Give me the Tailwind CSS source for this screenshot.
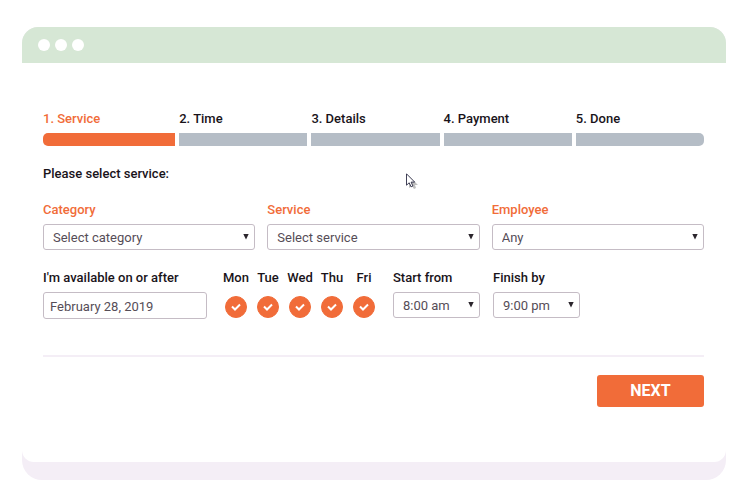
<!DOCTYPE html>
<html lang="en">
<head>
  <meta charset="UTF-8" />
  <meta name="viewport" content="width=device-width, initial-scale=1" />
  <title>Booking - Service</title>
  <script src="https://cdn.jsdelivr.net/npm/@tailwindcss/browser@4"></script>
</head>
<body class="bg-white font-['Roboto','Liberation_Sans',sans-serif] text-[13px] leading-4 text-[#19131a]">
  <!-- Window frame -->
  <div class="ml-[22px] mr-[18px] mt-[27px] rounded-t-2xl rounded-b-[20px] bg-[#f4eef6] pb-[18px]">
    <header class="flex h-9 items-center gap-[5px] rounded-t-2xl bg-[#d6e7d5] pl-4">
      <span class="size-3 rounded-full bg-white"></span>
      <span class="size-3 rounded-full bg-white"></span>
      <span class="size-3 rounded-full bg-white"></span>
    </header>

    <main class="rounded-b-xl bg-white pt-12 pr-[22px] pb-[55px] pl-[21px]">
      <!-- Steps -->
      <ol class="grid grid-cols-[132fr_128fr_128fr_128fr_128fr] gap-1 font-medium">
        <li class="text-[#f16c39]">1. Service<div class="mt-1.5 h-[13px] rounded-l-[5px] bg-[#f16c39]"></div></li>
        <li>2. Time<div class="mt-1.5 h-[13px] bg-[#b5bdc6]"></div></li>
        <li>3. Details<div class="mt-1.5 h-[13px] bg-[#b5bdc6]"></div></li>
        <li>4. Payment<div class="mt-1.5 h-[13px] bg-[#b5bdc6]"></div></li>
        <li>5. Done<div class="mt-1.5 h-[13px] rounded-r-[5px] bg-[#b5bdc6]"></div></li>
      </ol>

      <form>
        <p class="mt-5 font-medium">Please select service:</p>

        <div class="mt-5 grid grid-cols-3 gap-3">
          <div>
            <label for="category" class="block font-medium text-[#f16c39]">Category</label>
            <div class="relative mt-1.5">
              <select id="category" class="block h-[26px] w-full appearance-none rounded-[3px] border border-[#c5bcc5] bg-white pt-0.5 pl-[9px] text-[13px] text-[#564d57]">
                <option>Select category</option>
              </select>
              <svg class="pointer-events-none absolute top-[10px] right-[6px] h-[6px] w-[6px]" viewBox="0 0 6 6" fill="#2b252c"><path d="M.3 0h5.4L3 5.5z" /></svg>
            </div>
          </div>
          <div>
            <label for="service" class="block font-medium text-[#f16c39]">Service</label>
            <div class="relative mt-1.5">
              <select id="service" class="block h-[26px] w-full appearance-none rounded-[3px] border border-[#c5bcc5] bg-white pt-0.5 pl-[9px] text-[13px] text-[#564d57]">
                <option>Select service</option>
              </select>
              <svg class="pointer-events-none absolute top-[10px] right-[6px] h-[6px] w-[6px]" viewBox="0 0 6 6" fill="#2b252c"><path d="M.3 0h5.4L3 5.5z" /></svg>
            </div>
          </div>
          <div>
            <label for="employee" class="block font-medium text-[#f16c39]">Employee</label>
            <div class="relative mt-1.5">
              <select id="employee" class="block h-[26px] w-full appearance-none rounded-[3px] border border-[#c5bcc5] bg-white pt-0.5 pl-[9px] text-[13px] text-[#564d57]">
                <option>Any</option>
              </select>
              <svg class="pointer-events-none absolute top-[10px] right-[6px] h-[6px] w-[6px]" viewBox="0 0 6 6" fill="#2b252c"><path d="M.3 0h5.4L3 5.5z" /></svg>
            </div>
          </div>
        </div>

        <!-- Availability -->
        <div class="mt-5 flex">
          <div class="w-[164px]">
            <label for="date" class="block font-medium">I'm available on or after</label>
            <input id="date" type="text" value="February 28, 2019" class="mt-1.5 block h-[27px] w-full rounded-[3px] border border-[#c5bcc5] bg-white px-1.5 pt-0.5 text-[13px] text-[#564d57]" />
          </div>
          <div class="ml-[13px] grid grid-cols-[32px_32px_32px_32px_32px] font-medium">
            <label class="flex flex-col items-center gap-[10px]">Mon
              <span class="relative block size-[22px]">
                <input type="checkbox" checked class="peer block size-[22px] appearance-none rounded-full border border-[#f16c39] checked:bg-[#f16c39]" />
                <svg class="pointer-events-none absolute inset-0 hidden peer-checked:block" viewBox="0 0 22 22" fill="none" stroke="#fff" stroke-width="2"><path d="M7 10.5l3 3 5-5" /></svg>
              </span>
            </label>
            <label class="flex flex-col items-center gap-[10px]">Tue
              <span class="relative block size-[22px]">
                <input type="checkbox" checked class="peer block size-[22px] appearance-none rounded-full border border-[#f16c39] checked:bg-[#f16c39]" />
                <svg class="pointer-events-none absolute inset-0 hidden peer-checked:block" viewBox="0 0 22 22" fill="none" stroke="#fff" stroke-width="2"><path d="M7 10.5l3 3 5-5" /></svg>
              </span>
            </label>
            <label class="flex flex-col items-center gap-[10px]">Wed
              <span class="relative block size-[22px]">
                <input type="checkbox" checked class="peer block size-[22px] appearance-none rounded-full border border-[#f16c39] checked:bg-[#f16c39]" />
                <svg class="pointer-events-none absolute inset-0 hidden peer-checked:block" viewBox="0 0 22 22" fill="none" stroke="#fff" stroke-width="2"><path d="M7 10.5l3 3 5-5" /></svg>
              </span>
            </label>
            <label class="flex flex-col items-center gap-[10px]">Thu
              <span class="relative block size-[22px]">
                <input type="checkbox" checked class="peer block size-[22px] appearance-none rounded-full border border-[#f16c39] checked:bg-[#f16c39]" />
                <svg class="pointer-events-none absolute inset-0 hidden peer-checked:block" viewBox="0 0 22 22" fill="none" stroke="#fff" stroke-width="2"><path d="M7 10.5l3 3 5-5" /></svg>
              </span>
            </label>
            <label class="flex flex-col items-center gap-[10px]">Fri
              <span class="relative block size-[22px]">
                <input type="checkbox" checked class="peer block size-[22px] appearance-none rounded-full border border-[#f16c39] checked:bg-[#f16c39]" />
                <svg class="pointer-events-none absolute inset-0 hidden peer-checked:block" viewBox="0 0 22 22" fill="none" stroke="#fff" stroke-width="2"><path d="M7 10.5l3 3 5-5" /></svg>
              </span>
            </label>
          </div>
          <div class="ml-[13px] w-[87px]">
            <label for="start" class="block font-medium">Start from</label>
            <div class="relative mt-1.5">
              <select id="start" class="block h-[26px] w-full appearance-none rounded-[3px] border border-[#c5bcc5] bg-white pt-0.5 pl-[9px] text-[13px] text-[#564d57]">
                <option>8:00 am</option>
              </select>
              <svg class="pointer-events-none absolute top-[10px] right-[6px] h-[6px] w-[6px]" viewBox="0 0 6 6" fill="#2b252c"><path d="M.3 0h5.4L3 5.5z" /></svg>
            </div>
          </div>
          <div class="ml-[13px] w-[87px]">
            <label for="finish" class="block font-medium">Finish by</label>
            <div class="relative mt-1.5">
              <select id="finish" class="block h-[26px] w-full appearance-none rounded-[3px] border border-[#c5bcc5] bg-white pt-0.5 pl-[9px] text-[13px] text-[#564d57]">
                <option>9:00 pm</option>
              </select>
              <svg class="pointer-events-none absolute top-[10px] right-[6px] h-[6px] w-[6px]" viewBox="0 0 6 6" fill="#2b252c"><path d="M.3 0h5.4L3 5.5z" /></svg>
            </div>
          </div>
        </div>

        <div class="mt-9 flex justify-end border-t-2 border-[#f4eef6] pt-[18px]">
          <button type="submit" class="h-8 w-[107px] rounded-[3px] bg-[#f16c39] text-base font-bold text-white">NEXT</button>
        </div>
      </form>
    </main>
  </div>

  <!-- Pointer -->
  <svg class="pointer-events-none absolute top-[173px] left-[406px] h-4 w-3" viewBox="0 0 12 16">
    <path d="M3 3v12l3-2 2 3 2-1-1-3h3z" fill="#000" opacity=".25" />
    <path d="M.5 .8v11.4l2.7-2.4 1.9 4 1.8-.8-1.8-3.9h3.6z" fill="#fff" stroke="#2d2d45" stroke-width=".9" />
  </svg>
</body>
</html>
